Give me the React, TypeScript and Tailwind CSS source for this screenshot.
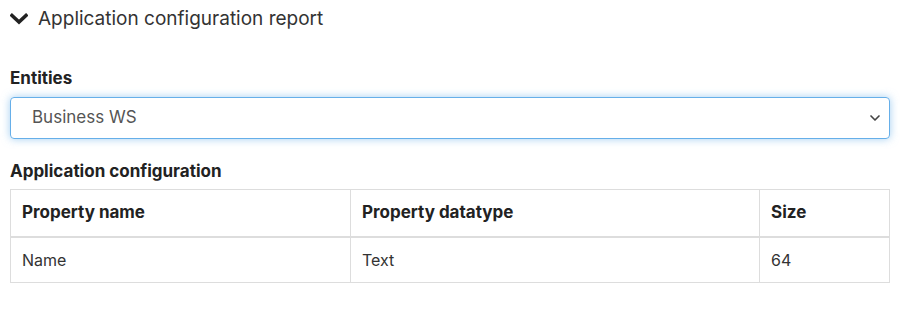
import { ChevronDown } from "lucide-react";

export default function App() {
  return (
    <div
      className="w-[904px] h-[312px] bg-white pl-[10px] pr-[14px] text-[#333]"
      style={{ fontFamily: "Inter, 'Liberation Sans', sans-serif" }}
    >
      <div className="flex items-center gap-[10px] pt-[2px] h-[36px]">
        <svg width="18" height="12" viewBox="0 0 18 12" className="shrink-0">
          <path d="M2 2.5 L9 9 L16 2.5" fill="none" stroke="#222" strokeWidth="3.6" strokeLinecap="square" />
        </svg>
        <span className="text-[19px] text-[#333]">Application configuration report</span>
      </div>

      <div className="mt-[31px] text-[17px] font-bold text-[#222] leading-[22px]">Entities</div>
      <div className="mt-[8px] h-[42px] rounded-[4px] border border-[#66afe9] shadow-[0_0_8px_rgba(102,175,233,0.6)] flex items-center justify-between pl-[21px] pr-[6px]">
        <span className="text-[17px] text-[#555]">Business WS</span>
        <ChevronDown size={16} strokeWidth={2.5} className="text-[#444]" />
      </div>

      <div className="mt-[21px] text-[17px] font-bold text-[#222] leading-[22px]">Application configuration</div>
      <table className="mt-[7px] w-full border-collapse border border-[#ddd] text-[16px]">
        <thead>
          <tr className="h-[47px] border-b-2 border-[#ddd]">
            <th className="w-[340px] border border-[#ddd] text-left font-bold text-[17px] text-[#222] px-[11px]">Property name</th>
            <th className="w-[409px] border border-[#ddd] text-left font-bold text-[17px] text-[#222] px-[11px]">Property datatype</th>
            <th className="border border-[#ddd] text-left font-bold text-[17px] text-[#222] px-[11px]">Size</th>
          </tr>
        </thead>
        <tbody>
          <tr className="h-[46px]">
            <td className="border border-[#ddd] px-[11px] text-[#333]">Name</td>
            <td className="border border-[#ddd] px-[11px] text-[#333]">Text</td>
            <td className="border border-[#ddd] px-[11px] text-[#333]">64</td>
          </tr>
        </tbody>
      </table>
    </div>
  );
}
